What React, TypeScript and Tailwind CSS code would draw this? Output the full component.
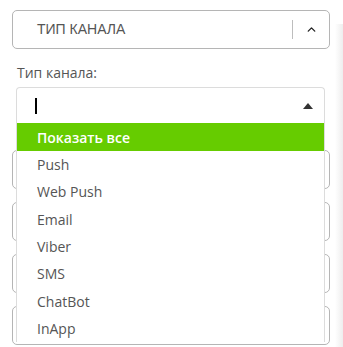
import { ChevronUp } from "lucide-react";

const options = ["Push", "Web Push", "Email", "Viber", "SMS", "ChatBot", "InApp"];

export default function App() {
  return (
    <div className="relative h-[347px] w-[343px] overflow-hidden bg-white font-['Open_Sans',sans-serif]">
      {/* panel edge shadow */}
      <div className="absolute right-0 top-[24px] h-[330px] w-[8px] bg-gradient-to-r from-white to-[#eeeeee]" />

      <div className="pt-[10px]">
        <div className="ml-[12px] flex h-[39px] w-[318px] items-center rounded-[5px] border border-[#b5b5b5] bg-white">
          <span className="flex-1 pl-[24px] font-['Liberation_Sans',sans-serif] text-[14px] text-[#555]">
            ТИП КАНАЛА
          </span>
          <span className="h-[19px] w-px bg-[#bdbdbd]" />
          <span className="flex w-[36px] items-center justify-center text-[#222]">
            <ChevronUp size={13} strokeWidth={2.5} />
          </span>
        </div>

        <div className="ml-[17px] mt-[14px] text-[14px] leading-[20px] text-[#555]">Тип канала:</div>

        <div className="relative ml-[16px] mt-[4px] w-[309px]">
          <div className="flex h-[36px] items-center rounded-t-[4px] border border-b-0 border-[#dcdcdc] bg-white pl-[18px] pr-[11px]">
            <span className="h-[16px] w-[2px] bg-black" />
            <span className="flex-1" />
            <svg width="10" height="6" viewBox="0 0 10 6">
              <path d="M0 6 L5 0 L10 6 Z" fill="#333" />
            </svg>
          </div>

          <div className="absolute left-0 right-0 top-[36px] z-10 border-x border-[#dcdcdc] bg-white">
            <div className="flex h-[28px] items-center bg-[#66cc00] pl-[20px] text-[14px] font-semibold text-white">
              Показать все
            </div>
            {options.map((option) => (
              <div key={option} className="flex h-[27.3px] items-center pl-[20px] text-[14px] text-[#555]">
                {option}
              </div>
            ))}
          </div>
        </div>

        <div className="ml-[12px] mt-[27px] flex w-[318px] flex-col gap-[13px]">
          {[0, 1, 2, 3].map((n) => (
            <div key={n} className="h-[39px] rounded-[5px] border border-[#b5b5b5] bg-white" />
          ))}
        </div>
      </div>
    </div>
  );
}
